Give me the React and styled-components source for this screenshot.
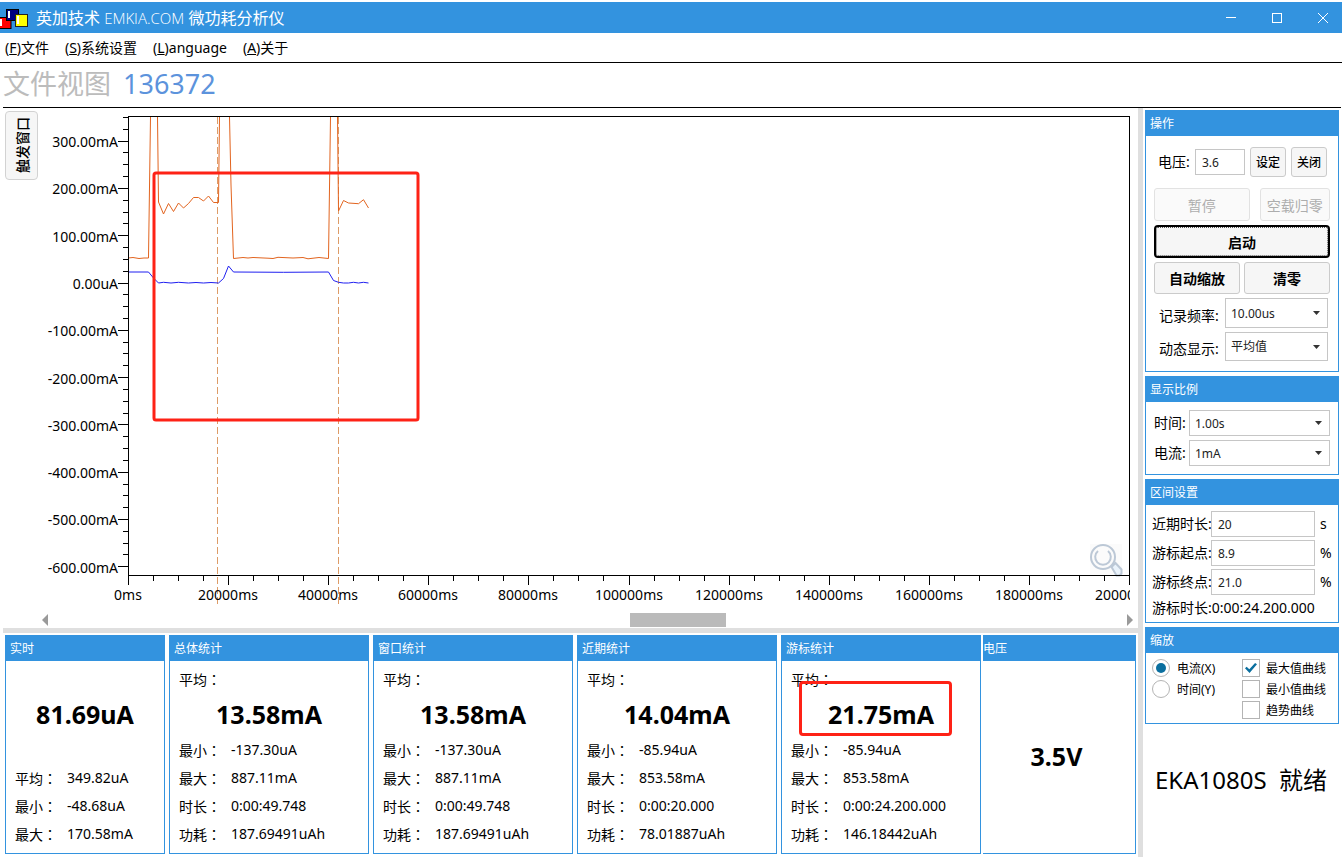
import { useState } from "react";
import { styled, createGlobalStyle } from "styled-components";

const blue = "#3393df";
const grey = "#dfdfdf";

const GlobalStyle = createGlobalStyle`
* {
  box-sizing: border-box;
}

body {
  margin: 0;
  background: #fff;
  color: #000;
  font-family: "Noto Sans", "Noto Sans CJK SC", sans-serif;
  font-size: 14px;
}

button, input, select {
  font-family: inherit;
}
`

const Window = styled.div`
display: flex;
flex-direction: column;
min-height: 100vh;
padding-top: 2px;
`

const TitleBar = styled.header`
display: flex;
align-items: center;
height: 31px;
padding-right: 5px;
background: ${blue};
color: #fff;
`

const Title = styled.h1`
flex: 1;
margin: 0 0 0 8px;
font-size: 16px;
font-weight: 400;
line-height: 24px;

  span {
    font-family: "Open Sans", sans-serif;
    font-size: 15px;
    font-weight: 300;
  }
`

const WindowControls = styled.div`
display: flex;
gap: 18px;

  button {
    width: 28px;
    height: 28px;
    padding: 0;
    border: 0;
    background: none;
    display: flex;
    align-items: center;
    justify-content: center;
  }
`

const MenuBar = styled.nav`
display: flex;
gap: 16px;
height: 30px;
padding-left: 5px;
border-bottom: 1px solid #000;

  a {
    color: #000;
    line-height: 29px;
    text-decoration: none;
  }
`

const ViewHeading = styled.div`
display: flex;
align-items: center;
gap: 12px;
height: 45px;
margin: 0 1px 0 3px;
padding-bottom: 3px;
border-bottom: 1px solid #000;
color: #bcbcbc;
font-size: 27px;
line-height: 36px;

  strong {
    color: #5c93dc;
    font-weight: 400;
  }
`

const Main = styled.main`
flex: 1;
display: flex;
`

const Workspace = styled.section`
flex: 1;
min-width: 0;
`

const Splitter = styled.div`
width: 5px;
background: ${grey};
`

const ChartArea = styled.div`
display: flex;
align-items: flex-start;
padding-left: 5px;
`

const TriggerButton = styled.button`
width: 33px;
height: 69px;
margin-top: 3px;
padding: 0;
border: 1px solid #d2d2d2;
border-radius: 4px;
background: #f6f6f6;
color: #000;
font-size: 14px;
font-weight: 500;
writing-mode: vertical-rl;
text-orientation: sideways;
transform: rotate(180deg);
`

const ChartSvg = styled.svg`
flex: 1;
min-width: 0;
display: block;

  text {
    font-size: 14px;
  }
`

const ScrollRow = styled.div`
display: flex;
align-items: center;
height: 20px;
padding: 3px 5px 0 42px;
`

const ScrollTrack = styled.div`
flex: 1;
height: 14px;
margin: 0 7px;
`

const ScrollThumb = styled.div`
width: 9%;
height: 14px;
margin-left: 54%;
background: #bababa;
`

const ScrollArrow = styled.button`
display: flex;
padding: 0;
border: 0;
background: none;
`

const StatsArea = styled.div`
margin-left: 3px;
padding: 2px 2px 3px;
border-top: 5px solid ${grey};
display: grid;
grid-template-columns: 164fr 204fr 204fr 204fr 202fr 153fr;
`

const PanelTitle = styled.h2`
height: 26px;
margin: 0;
padding-left: 4px;
background: ${blue};
color: #fff;
font-size: 12px;
font-weight: 400;
line-height: 28px;
`

const Card = styled.section`
position: relative;
display: flex;
flex-direction: column;
min-width: 0;
margin-right: ${(props) => props.$gap}px;
border: 1px solid ${blue};
border-top: 0;
border-left-width: ${(props) => (props.$flush ? 0 : 1)}px;

  ${PanelTitle} {
    padding-left: ${(props) => (props.$flush ? 0 : 4)}px;
  }
`

const CardBody = styled.div`
flex: 1;
display: flex;
flex-direction: column;
justify-content: center;
padding: 4px ${(props) => props.$shift || 0}px 5px 0;
`

const StatRow = styled.div`
display: flex;
height: 28px;
padding-left: 9px;
line-height: 28px;
white-space: nowrap;
`

const StatLabel = styled.span`
width: 52px;

  i {
    font-family: "Noto Sans CJK TC", sans-serif;
    font-style: normal;
  }
`

const BigValue = styled.div`
margin: ${(props) => (props.$alone ? "28px 0" : "0")};
font-size: 25px;
font-weight: 700;
line-height: 43px;
text-align: center;
`

const Highlight = styled.div`
position: absolute;
top: 46px;
left: 17px;
width: 153px;
height: 55px;
border: 3px solid #fe2216;
border-radius: 4px;
`

const Sidebar = styled.aside`
width: 199px;
padding: 2px 3px 0 2px;
display: flex;
flex-direction: column;
gap: 4px;
`

const Panel = styled.section`
border: 1px solid ${blue};
border-top: 0;
`

const PanelBody = styled.div`
display: flex;
flex-direction: column;
gap: ${(props) => props.$gap}px;
padding: ${(props) => props.$pad};
`

const Row = styled.div`
display: flex;
align-items: ${(props) => props.$align || "center"};
gap: ${(props) => props.$gap || 0}px;
padding: ${(props) => props.$pad || "0"};

  label {
    flex: none;
    line-height: 24px;
    white-space: nowrap;
  }
`

const Label = styled.label`
width: ${(props) => props.$width}px;
`

const TextInput = styled.input`
flex: 1;
min-width: 0;
width: 0;
height: 26px;
padding: 0 6px;
border: 1px solid #c6c6c6;
color: #222;
background: #fff;
font-size: 12px;
`

const Unit = styled.span`
width: 23px;
padding-left: 5px;
line-height: 24px;
`

const Duration = styled.div`
display: flex;
line-height: 20px;
padding-bottom: 4px;
white-space: nowrap;
`

const Button = styled.button`
flex: ${(props) => props.$grow || "none"};
width: ${(props) => (props.$small ? "36px" : "auto")};
height: ${(props) => (props.$small ? 30 : 32)}px;
padding: 0;
border: 1px solid #cbcbcb;
border-radius: 3px;
background: #f6f6f6;
color: #000;
font-size: ${(props) => (props.$small ? 12 : 14)}px;
font-weight: ${(props) => (props.$small ? 500 : 700)};
white-space: nowrap;

&:disabled {
    height: 33px;
    border-color: #e2e2e2;
    background: #fafafa;
    color: #adadad;
    font-weight: 400;
}
`

const StartButton = styled(Button)`
height: 33px;
border: 2px solid #000;
border-radius: 4px;
outline: 1px dotted #555;
outline-offset: -3px;
`

const SelectBox = styled.div`
position: relative;
flex: 1;
min-width: 0;

  select {
    display: block;
    width: 100%;
    height: ${(props) => props.$height}px;
    padding: 0 20px 0 5px;
    border: 1px solid #c6c6c6;
    border-radius: 0;
    background: #fff;
    color: #222;
    font-size: 12px;
    appearance: none;
  }

  svg {
    position: absolute;
    right: 8px;
    top: calc(50% - 2px);
    pointer-events: none;
  }
`

const Choices = styled.div`
display: flex;
justify-content: space-between;
padding: 6px 12px 4px 6px;
`

const ChoiceColumn = styled.div`
display: flex;
flex-direction: column;
gap: 3px;
`

const Choice = styled.label`
display: flex;
align-items: center;
gap: 6px;
height: 18px;
font-size: 12px;
white-space: nowrap;

  input {
    appearance: none;
    display: grid;
    place-content: center;
    width: 18px;
    height: 18px;
    margin: 0;
    border: 1px solid #b4b4b4;
    background: #fff;
  }

  input[type="radio"] {
    border-radius: 50%;
    margin-right: 1px;
  }

  input[type="radio"]:checked::before {
    content: "";
    width: 10px;
    height: 10px;
    border-radius: 50%;
    background: #0b6f9f;
  }

  input[type="checkbox"]:checked::before {
    content: "";
    width: 12px;
    height: 10px;
    background: #0b6f9f;
    clip-path: polygon(0 52%, 14% 38%, 36% 62%, 84% 0, 100% 12%, 38% 100%);
  }
`

const Status = styled.p`
margin: 34px 0 0 10px;
font-size: 24px;
line-height: 36px;
white-space: pre;
`

const Logo = () => (
    <svg width="28" height="22" viewBox="0 0 28 22" aria-hidden="true">
        <rect x="-1" y="10.5" width="12" height="11" fill="#f00" stroke="#000" />
        <rect x="0" y="12" width="2" height="7" fill="#fff" />
        <rect x="6.5" y="2.5" width="12" height="11" fill="#000080" stroke="#000" />
        <rect x="8" y="4" width="2" height="7" fill="#fff" />
        <rect x="15.5" y="7.5" width="12" height="12" fill="#ff0" stroke="#222" />
        <rect x="17" y="9" width="2" height="8" fill="#fff" />
    </svg>
)

const Arrow = () => (
    <svg width="7" height="4" viewBox="0 0 7 4" aria-hidden="true">
        <path d="M0 0h7L3.500 4z" fill="#333" />
    </svg>
)

const LEFT = 128.5;
const RIGHT = 1129.5;
const TOP = 116.5;
const BOTTOM = 575.5;
const ZERO = 283.5;
const Y_STEP = 47.3;
const X_STEP = 100.1;

const yLabels = [300, 200, 100, 0, -100, -200, -300, -400, -500, -600];
const xLabels = [0, 20000, 40000, 60000, 80000, 100000, 120000, 140000, 160000, 180000, 200000];

const yTicks = [];
for (let i = -14; i <= 24; i++) {
    yTicks.push({ y: Math.round(ZERO + (i * Y_STEP) / 4) - 0.5, major: i % 4 === 0 });
}

const xTicks = [];
for (let i = 0; i <= 40; i++) {
    xTicks.push({ x: Math.round(LEFT - 0.5 + (i * X_STEP) / 4) + 0.5, major: i % 4 === 0 });
}

const maxCurve =
    "128,258 133,257.500 139,258.500 144,258 148.500,258 150.500,117 M157.500,117 158.500,202 163.500,214 168.500,203.500 173.500,211.500 178.500,203 183.500,208 188.500,203.500 193.500,197.500 198.500,197.500 203.500,201 208.500,196 213.500,202.500 218.500,202.500 219.500,117 M229.500,117 231,185 233.500,258.500 243,257.500 248,258 253,257.500 268,258.200 273,258.500 278,257.300 293,258 303,257.500 308,258.800 319,257.500 328.500,258.500 330.500,117 M337.500,117 338.500,211 343.500,200.500 348.500,203 358.500,203.700 363.500,199.700 368.500,208";

const avgCurve =
    "128,272 148.500,272 153.500,278 158.500,283 163.500,282.300 171,283 178.500,282.300 188.500,283 196,282.500 203.500,283 211,282.500 218.500,283 223.500,278.500 228.500,266 233.500,272 283.500,272.300 328.500,272 333.500,280.500 338.500,282.300 343.500,283 348.500,283 353.500,282.300 358.500,283 363.500,282.300 368.500,283";

const formatY = (value) => (value === 0 ? "0.00uA" : value.toFixed(2) + "mA")

const Chart = () => (
    <ChartSvg viewBox="38 108 1100 500" role="img" aria-label="电流曲线">
        <defs>
            <clipPath id="axis">
                <rect x="38" y="108" width="1092" height="500" />
            </clipPath>
        </defs>

        <g fill="#fbfbfb" stroke="#bcc8d6" strokeWidth="2">
            <rect x="1090" y="544" width="32" height="31" stroke="none" />
            <path d="M1111.500 567l4-4 6 6.500v4l-2 2h-3z" fill="#eaf3fb" />
            <circle cx="1103" cy="557" r="12" />
            <path d="M1098 551a7.800 7.800 0 1 0 10 0" fill="none" />
        </g>

        <g stroke="#dd9c68" strokeDasharray="7 3">
            <path d="M217.500 117V604" />
            <path d="M338.500 117V604" />
        </g>
        <path d={"M" + maxCurve} fill="none" stroke="#e2641f" />
        <path d={"M" + avgCurve} fill="none" stroke="#1f1ff0" />

        <g stroke="#000">
            <rect x={LEFT} y={TOP} width={RIGHT - LEFT} height={BOTTOM - TOP} fill="none" />
            {yTicks.map((t) => (
                <path key={t.y} d={`M${t.major ? 118 : 123} ${t.y}H128`} />
            ))}
            {xTicks.map((t) => (
                <path key={t.x} d={`M${t.x} 576V${t.major ? 585 : 581}`} />
            ))}
        </g>

        <g textAnchor="end">
            {yLabels.map((value, i) => (
                <text key={value} x="118" y={Math.round(147 + i * Y_STEP)}>{formatY(value)}</text>
            ))}
        </g>
        <g textAnchor="middle" clipPath="url(#axis)">
            {xLabels.map((value, i) => (
                <text key={value} x={Math.round(128 + i * X_STEP)} y="600">{value}ms</text>
            ))}
        </g>

        <rect x="154" y="173" width="264" height="247" rx="2" fill="none" stroke="#fe2216" strokeWidth="3" />
    </ChartSvg>
)

const stats = [
    { title: "实时", value: "81.69uA", rows: [["平均", "349.82uA"], ["最小", "-48.68uA"], ["最大", "170.58mA"]] },
    { title: "总体统计", value: "13.58mA", average: true, rows: [["最小", "-137.30uA"], ["最大", "887.11mA"], ["时长", "0:00:49.748"], ["功耗", "187.69491uAh"]] },
    { title: "窗口统计", value: "13.58mA", average: true, rows: [["最小", "-137.30uA"], ["最大", "887.11mA"], ["时长", "0:00:49.748"], ["功耗", "187.69491uAh"]] },
    { title: "近期统计", value: "14.04mA", average: true, rows: [["最小", "-85.94uA"], ["最大", "853.58mA"], ["时长", "0:00:20.000"], ["功耗", "78.01887uAh"]] },
    { title: "游标统计", value: "21.75mA", average: true, marked: true, rows: [["最小", "-85.94uA"], ["最大", "853.58mA"], ["时长", "0:00:24.200.000"], ["功耗", "146.18442uAh"]] },
];

const Stat = ({ label, value }) => (
    <StatRow>
        <StatLabel>{label}<i>：</i></StatLabel>
        <span>{value}</span>
    </StatRow>
)

const StatCard = ({ item }) => (
    <Card $gap={item.marked ? 2 : 4}>
        <PanelTitle>{item.title}</PanelTitle>
        <CardBody>
            {item.average && <Stat label="平均" />}
            <BigValue $alone={!item.average}>{item.value}</BigValue>
            {item.rows.map(([label, value]) => (
                <Stat key={label} label={label} value={value} />
            ))}
        </CardBody>
        {item.marked && <Highlight />}
    </Card>
)

const Select = ({ id, height, value }) => (
    <SelectBox $height={height}>
        <select id={id} defaultValue={value}>
            <option>{value}</option>
        </select>
        <Arrow />
    </SelectBox>
)

const RangeField = ({ id, label, value, unit }) => (
    <Row>
        <Label htmlFor={id} $width={59}>{label}:</Label>
        <TextInput id={id} defaultValue={value} />
        <Unit>{unit}</Unit>
    </Row>
)

const App = () => {

const [axis, setAxis] = useState("x");

    return (
        <Window>
            <GlobalStyle />
            <TitleBar>
                <Logo />
                <Title>英加技术 <span>EMKIA.COM</span> 微功耗分析仪</Title>
                <WindowControls>
                    <button aria-label="最小化">
                        <svg width="10" height="10" stroke="#fff"><path d="M0 4.500h10" /></svg>
                    </button>
                    <button aria-label="最大化">
                        <svg width="10" height="10" stroke="#fff" fill="none"><rect x="0.500" y="0.500" width="9" height="9" /></svg>
                    </button>
                    <button aria-label="关闭窗口">
                        <svg width="10" height="10" stroke="#fff"><path d="M0 0l10 10M10 0L0 10" /></svg>
                    </button>
                </WindowControls>
            </TitleBar>

            <MenuBar>
                <a href="#file">(<u>F</u>)文件</a>
                <a href="#settings">(<u>S</u>)系统设置</a>
                <a href="#language">(<u>L</u>)anguage</a>
                <a href="#about">(<u>A</u>)关于</a>
            </MenuBar>

            <ViewHeading>
                <span>文件视图</span>
                <strong>136372</strong>
            </ViewHeading>

            <Main>
                <Workspace>
                    <ChartArea>
                        <TriggerButton>触发窗口</TriggerButton>
                        <Chart />
                    </ChartArea>
                    <ScrollRow>
                        <ScrollArrow aria-label="向左滚动">
                            <svg width="6" height="12" fill="#9a9a9a"><path d="M6 0v12L0 6z" /></svg>
                        </ScrollArrow>
                        <ScrollTrack>
                            <ScrollThumb />
                        </ScrollTrack>
                        <ScrollArrow aria-label="向右滚动">
                            <svg width="6" height="12" fill="#9a9a9a"><path d="M0 0v12l6-6z" /></svg>
                        </ScrollArrow>
                    </ScrollRow>
                    <StatsArea>
                        {stats.map((item) => (
                            <StatCard key={item.title} item={item} />
                        ))}
                        <Card $flush $gap={0}>
                            <PanelTitle>电压</PanelTitle>
                            <CardBody $shift={5}>
                                <BigValue>3.5V</BigValue>
                            </CardBody>
                        </Card>
                    </StatsArea>
                </Workspace>

                <Splitter />

                <Sidebar>
                    <Panel>
                        <PanelTitle>操作</PanelTitle>
                        <PanelBody $gap={4} $pad="11px 8px 10px">
                            <Row $gap={5} $pad="0 3px 7px 4px">
                                <Label htmlFor="voltage" $width={32}>电压:</Label>
                                <TextInput id="voltage" defaultValue="3.6" />
                                <Button $small>设定</Button>
                                <Button $small>关闭</Button>
                            </Row>
                            <Row $gap={10}>
                                <Button $grow="96 1 0" disabled>暂停</Button>
                                <Button $grow="70 1 0" disabled>空载归零</Button>
                            </Row>
                            <StartButton>启动</StartButton>
                            <Row $gap={4}>
                                <Button $grow="1 1 0">自动缩放</Button>
                                <Button $grow="1 1 0">清零</Button>
                            </Row>
                            <Row $align="flex-end" $gap={6} $pad="0 2px 0 5px">
                                <Label htmlFor="rate" $width={60}>记录频率:</Label>
                                <Select id="rate" height={30} value="10.00us" />
                            </Row>
                            <Row $align="flex-end" $gap={6} $pad="0 2px 0 5px">
                                <Label htmlFor="display" $width={60}>动态显示:</Label>
                                <Select id="display" height={29} value="平均值" />
                            </Row>
                        </PanelBody>
                    </Panel>

                    <Panel>
                        <PanelTitle>显示比例</PanelTitle>
                        <PanelBody $gap={4} $pad="8px">
                            <Row $gap={3}>
                                <Label htmlFor="time" $width={32}>时间:</Label>
                                <Select id="time" height={26} value="1.00s" />
                            </Row>
                            <Row $gap={3}>
                                <Label htmlFor="current" $width={32}>电流:</Label>
                                <Select id="current" height={26} value="1mA" />
                            </Row>
                        </PanelBody>
                    </Panel>

                    <Panel>
                        <PanelTitle>区间设置</PanelTitle>
                        <PanelBody $gap={3} $pad="6px 0 0 6px">
                            <RangeField id="recent" label="近期时长" value="20" unit="s" />
                            <RangeField id="start" label="游标起点" value="8.9" unit="%" />
                            <RangeField id="end" label="游标终点" value="21.0" unit="%" />
                            <Duration>游标时长:0:00:24.200.000</Duration>
                        </PanelBody>
                    </Panel>

                    <Panel>
                        <PanelTitle>缩放</PanelTitle>
                        <Choices>
                            <ChoiceColumn>
                                <Choice><input type="radio" name="axis" checked={axis === "x"} onChange={() => setAxis("x")} />电流(X)</Choice>
                                <Choice><input type="radio" name="axis" checked={axis === "y"} onChange={() => setAxis("y")} />时间(Y)</Choice>
                            </ChoiceColumn>
                            <ChoiceColumn>
                                <Choice><input type="checkbox" defaultChecked />最大值曲线</Choice>
                                <Choice><input type="checkbox" />最小值曲线</Choice>
                                <Choice><input type="checkbox" />趋势曲线</Choice>
                            </ChoiceColumn>
                        </Choices>
                    </Panel>

                    <Status>EKA1080S  就绪</Status>
                </Sidebar>
            </Main>
        </Window>
    )
}


export default App;
